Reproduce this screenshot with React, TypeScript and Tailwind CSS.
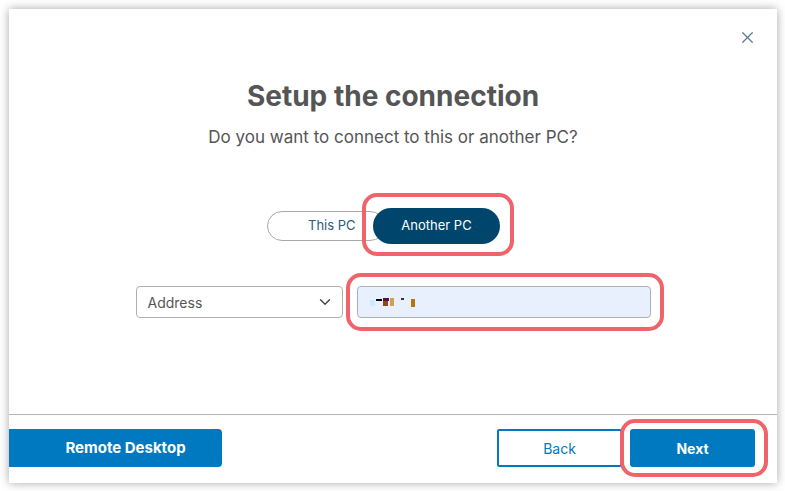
import { X, ChevronDown } from "lucide-react";

function Highlight({ className }: { className: string }) {
  return <span className={"pointer-events-none absolute rounded-[15px] border-4 border-[#f0636b] " + className} />;
}

export default function App() {
  return (
    <div className="w-[785px] h-[491px] bg-white p-[9px] font-['Inter',sans-serif]">
      <div className="relative flex h-[474px] w-[768px] flex-col bg-white shadow-[0_0_9px_rgba(0,0,0,0.35)]">
        <button className="absolute right-[20px] top-[19px] text-[#5b7a99]">
          <X size={19} strokeWidth={1.5} />
        </button>

        <div className="flex h-[406px] flex-col items-center border-b border-[#b4b4b4] pt-[70px]">
          <h1 className="text-[28px] font-bold leading-[34px] text-[#555]">Setup the connection</h1>
          <p className="mt-[12px] text-[17px] leading-[24px] text-[#555]">Do you want to connect to this or another PC?</p>

          <div className="mt-[59px] flex w-full justify-center pr-[19px]">
            <div className="flex items-center">
              <button className="h-[30px] w-[118px] rounded-full border border-[#a9a9a9] pl-[40px] pr-[20px] text-left text-[13px] text-[#2a5b7d]">
                This PC
              </button>
              <div className="relative -ml-[12px]">
                <button className="h-[36px] w-[127px] rounded-full bg-[#00466c] text-[13px] text-white">Another PC</button>
                <Highlight className="-left-[11px] -top-[15px] -right-[14px] -bottom-[12px]" />
              </div>
            </div>
          </div>

          <div className="mt-[42px] flex items-center gap-[14px]">
            <div className="flex h-[32px] w-[207px] items-center justify-between rounded-[4px] border border-[#b0b0b0] pl-[11px] pr-[8px] text-[14px] text-[#555]">
              <span>Address</span>
              <ChevronDown size={18} strokeWidth={1.8} className="text-[#444]" />
            </div>
            <div className="relative">
              <div className="flex h-[32px] w-[294px] items-center gap-[1px] rounded-[4px] border border-[#b0b0b0] bg-[#e8f0fe] pl-[12px]">
                <span className="mt-[2px] h-[6px] w-[5px] bg-[#c8ecff]" />
                <span className="-mt-[4px] h-[2px] w-[6px] bg-black" />
                <span className="flex flex-col">
                  <span className="h-[3px] w-[6px] bg-[#5e0a4a]" />
                  <span className="h-[5px] w-[5px] bg-[#8b4a10]" />
                </span>
                <span className="h-[8px] w-[4px] bg-[#d89c50]" />
                <span className="ml-[6px] -mt-[6px] h-[2px] w-[3px] bg-[#333]" />
                <span className="ml-[6px] mt-[2px] h-[8px] w-[4px] bg-[#b87410]" />
              </div>
              <Highlight className="-left-[11px] -top-[13px] -right-[13px] -bottom-[13px]" />
            </div>
          </div>
        </div>

        <div className="flex flex-1 items-start justify-between pr-[22px] pt-[14px]">
          <button className="h-[38px] w-[213px] rounded-r-[4px] bg-[#0079c1] pl-[20px] text-[15px] font-bold text-white">
            Remote Desktop
          </button>
          <div className="flex gap-[8px]">
            <button className="h-[38px] w-[125px] rounded-[2px] border-2 border-[#0079c1] text-[14px] text-[#0079c1]">Back</button>
            <div className="relative">
              <button className="h-[38px] w-[125px] rounded-[3px] bg-[#0079c1] text-[14px] font-bold text-white">Next</button>
              <Highlight className="-left-[10px] -top-[10px] -right-[13px] -bottom-[10px]" />
            </div>
          </div>
        </div>
      </div>
    </div>
  );
}
